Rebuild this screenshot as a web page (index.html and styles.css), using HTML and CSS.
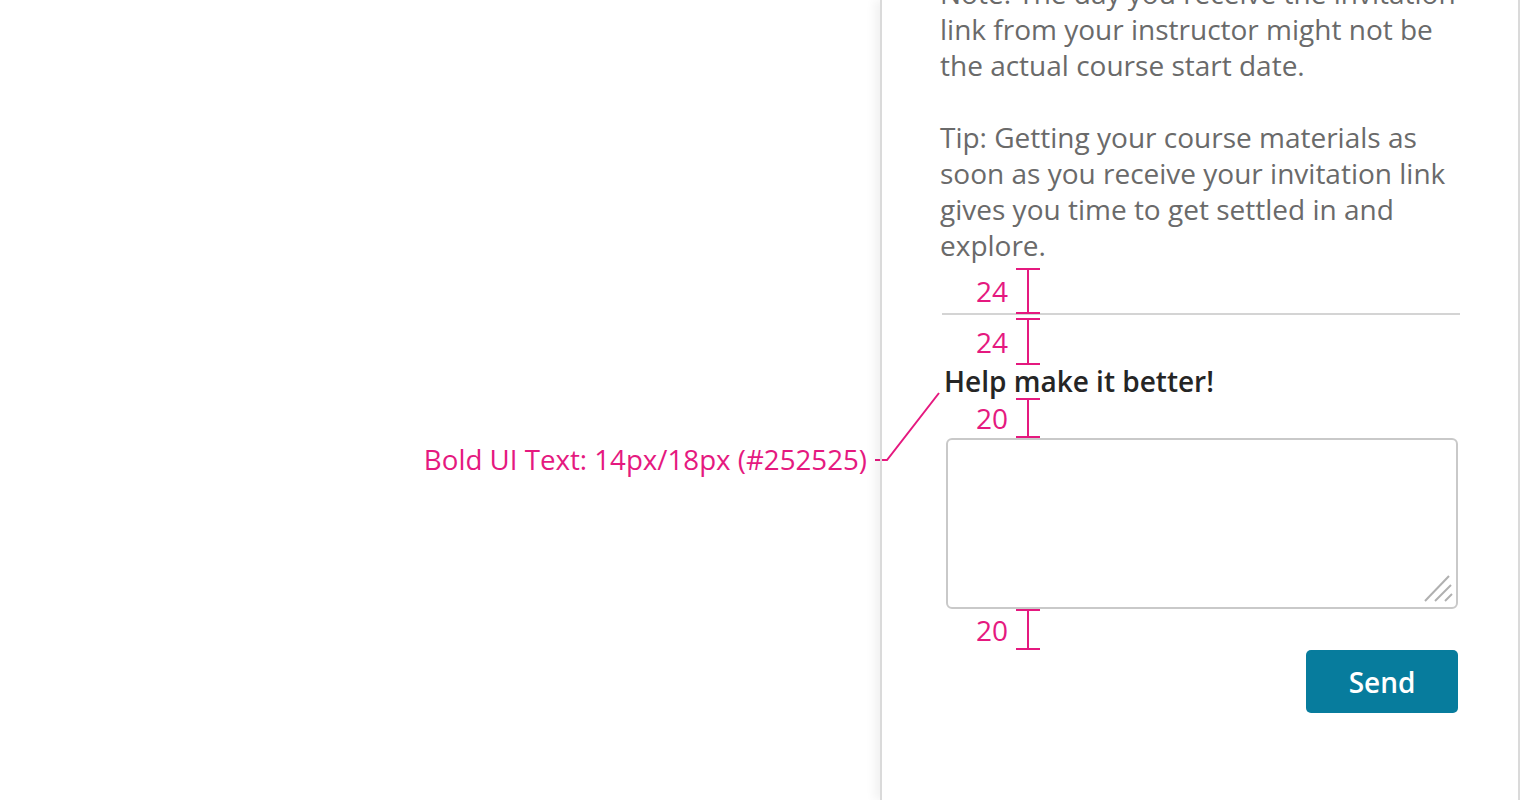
FILE: index.html
```html
<!DOCTYPE html>
<html lang="en">
<head>
<meta charset="utf-8">
<title>Help make it better</title>
<link rel="stylesheet" href="styles.css">
</head>
<body>
<div class="page">
  <div class="left">
    <div class="callout">Bold UI Text: 14px/18px (#252525)</div>
    <svg class="connector" width="80" height="80" viewBox="0 0 80 80">
      <polyline points="2,72 14,72 66,5" fill="none" stroke="#e5197f" stroke-width="2"/>
    </svg>
  </div>
  <div class="panel">
    <div class="content">
      <p class="body-text">Note: The day you receive the invitation link from your instructor might not be the actual course start date.</p>
      <p class="body-text">Tip: Getting your course materials as soon as you receive your invitation link gives you time to get settled in and explore.</p>
      <hr class="divider">
      <h2 class="heading">Help make it better!</h2>
      <div class="field">
        <textarea class="feedback" aria-label="Feedback"></textarea>
        <svg class="grip" width="30" height="30" viewBox="0 0 30 30">
          <line x1="2" y1="27" x2="26" y2="2" stroke="#b0b0b0" stroke-width="2"/>
          <line x1="12" y1="27" x2="28" y2="11" stroke="#b0b0b0" stroke-width="2"/>
          <line x1="22" y1="27" x2="29" y2="20" stroke="#b0b0b0" stroke-width="2"/>
        </svg>
      </div>
      <div class="actions">
        <button class="send" type="button">Send</button>
      </div>
    </div>

    <div class="spec spec-a"><span class="spec-num">24</span><span class="ibeam"></span></div>
    <div class="spec spec-b"><span class="spec-num">24</span><span class="ibeam"></span></div>
    <div class="spec spec-c"><span class="spec-num">20</span><span class="ibeam"></span></div>
    <div class="spec spec-d"><span class="spec-num">20</span><span class="ibeam"></span></div>
  </div>
</div>
</body>
</html>
```

FILE: styles.css
```css
* { box-sizing: border-box; }

html, body {
  margin: 0;
  padding: 0;
  background: #ffffff;
}

body {
  width: 1520px;
  height: 800px;
  overflow: hidden;
  font-family: "Open Sans", "Noto Sans", sans-serif;
}

.page {
  display: flex;
  width: 1520px;
  height: 800px;
}

.left {
  position: relative;
  flex: 0 0 880px;
}

.callout {
  position: absolute;
  right: 13px;
  top: 441px;
  font-size: 27.7px;
  line-height: 36px;
  color: #e5197f;
  white-space: nowrap;
}

.connector {
  position: absolute;
  left: 873px;
  top: 388px;
  overflow: visible;
}

.panel {
  position: relative;
  flex: 0 0 640px;
  height: 800px;
  border-left: 2px solid #dadada;
  border-right: 2px solid #dadada;
  box-shadow: -5px 0 10px rgba(0, 0, 0, 0.06);
  padding: 0 58px;
}

.content {
  margin-top: -25px;
  display: flex;
  flex-direction: column;
}

.body-text {
  margin: 0 0 36px 0;
  font-size: 28px;
  line-height: 36px;
  color: #6a6a6a;
}

.body-text:last-of-type {
  margin-bottom: 0;
}

.divider {
  margin: 50px 0 0 2px;
  border: 0;
  height: 2px;
  background: #d4d4d4;
}

.heading {
  margin: 48px 0 0 0;
  padding-left: 4px;
  font-size: 28px;
  line-height: 36px;
  font-weight: 600;
  color: #252525;
}

.field {
  position: relative;
  margin: 39px 2px 0 6px;
  height: 171px;
}

.feedback {
  display: block;
  width: 100%;
  height: 171px;
  border: 2px solid #c9c9c9;
  border-radius: 6px;
  resize: none;
  outline: none;
  background: #fff;
  font-family: inherit;
}

.grip {
  position: absolute;
  right: 5px;
  bottom: 5px;
}

.actions {
  display: flex;
  justify-content: flex-end;
  margin: 41px 2px 0 0;
}

.send {
  width: 152px;
  height: 63px;
  border: 0;
  border-radius: 5px;
  background: #077c9d;
  color: #ffffff;
  font-family: inherit;
  font-size: 28px;
  font-weight: 600;
  padding: 0;
}

.spec {
  position: absolute;
  left: 76px;
  width: 82px;
  display: flex;
  align-items: center;
  justify-content: flex-end;
}

.spec-num {
  font-size: 28px;
  line-height: 36px;
  color: #e5197f;
  margin-right: 8px;
}

.ibeam {
  position: relative;
  width: 24px;
  height: 100%;
  border-top: 2px solid #e5197f;
  border-bottom: 2px solid #e5197f;
}

.ibeam::before {
  content: "";
  position: absolute;
  left: 11px;
  top: 0;
  bottom: 0;
  width: 2px;
  background: #e5197f;
}

.spec-a { top: 268px; height: 46px; }
.spec-b { top: 318px; height: 47px; }
.spec-c { top: 398px; height: 40px; }
.spec-d { top: 609px; height: 41px; }
```
